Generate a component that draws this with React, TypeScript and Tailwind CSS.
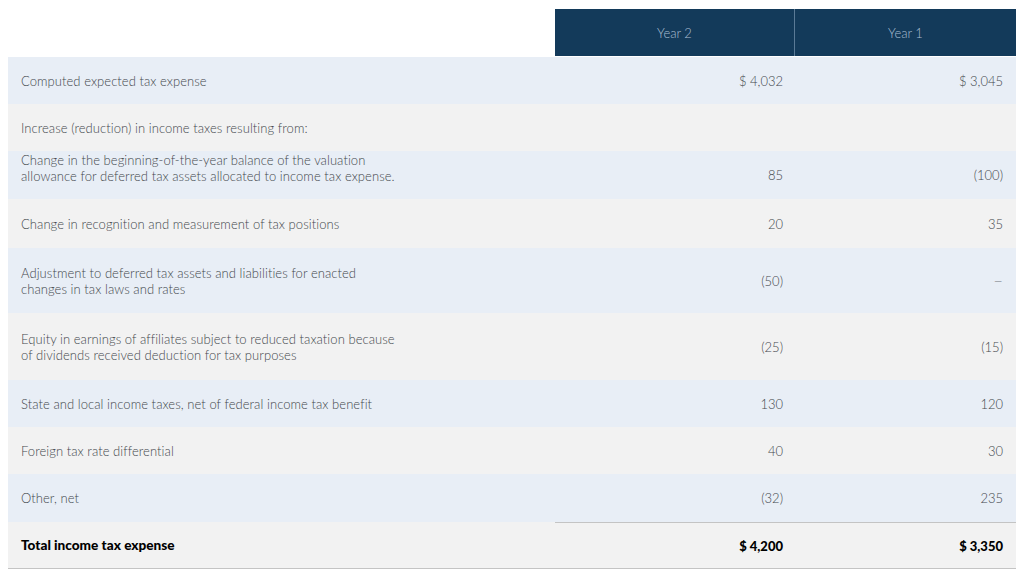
import React from 'react';

type Row = {
  label: string[];
  y2: string;
  y1: string;
  tone: 'blue' | 'gray';
  h: string;
  top?: boolean;
};

const rows: Row[] = [
  { label: ['Computed expected tax expense'], y2: '$ 4,032', y1: '$ 3,045', tone: 'blue', h: 'h-[47px]' },
  { label: ['Increase (reduction) in income taxes resulting from:'], y2: '', y1: '', tone: 'gray', h: 'h-[47px]' },
  {
    label: [
      'Change in the beginning-of-the-year balance of the valuation',
      'allowance for deferred tax assets allocated to income tax expense.',
    ],
    y2: '85',
    y1: '(100)',
    tone: 'blue',
    h: 'h-[48px]',
    top: true,
  },
  { label: ['Change in recognition and measurement of tax positions'], y2: '20', y1: '35', tone: 'gray', h: 'h-[49px]' },
  {
    label: ['Adjustment to deferred tax assets and liabilities for enacted', 'changes in tax laws and rates'],
    y2: '(50)',
    y1: '–',
    tone: 'blue',
    h: 'h-[65px]',
  },
  {
    label: ['Equity in earnings of affiliates subject to reduced taxation because', 'of dividends received deduction for tax purposes'],
    y2: '(25)',
    y1: '(15)',
    tone: 'gray',
    h: 'h-[67px]',
  },
  { label: ['State and local income taxes, net of federal income tax benefit'], y2: '130', y1: '120', tone: 'blue', h: 'h-[47px]' },
  { label: ['Foreign tax rate differential'], y2: '40', y1: '30', tone: 'gray', h: 'h-[47px]' },
  { label: ['Other, net'], y2: '(32)', y1: '235', tone: 'blue', h: 'h-[48px]' },
];

export default function App() {
  return (
    <div className="w-[1024px] h-[576px] bg-white pt-[9px] px-2 font-['Lato',sans-serif] text-[13px] leading-4 font-light text-[#44484d]">
      {/* Column headers */}
      <div className="grid grid-cols-[547px_240px_221px] h-[47px]">
        <div />
        <div className="bg-[#133a5a] flex items-center justify-center text-[#a9bdd2] border-r border-[#5a7a96]">
          Year 2
        </div>
        <div className="bg-[#133a5a] flex items-center justify-center text-[#a9bdd2]">Year 1</div>
      </div>

      <div className="mt-px">
        {rows.map((r, i) => (
          <div
            key={i}
            className={`grid grid-cols-[547px_240px_221px] ${r.h} ${r.tone === 'blue' ? 'bg-[#e8eef6]' : 'bg-[#f2f2f2]'}`}
          >
            <div className={`flex flex-col pl-[13px] ${r.top ? 'justify-start pt-[1px]' : 'justify-center'}`}>
              {r.label.map((l, j) => (
                <span key={j} className="tracking-[0.06px]">{l}</span>
              ))}
            </div>
            <div className="flex items-center justify-end pr-3">{r.y2}</div>
            <div className="flex items-center justify-end pr-[13px]">
              {r.y1 === '–' ? <span className="text-[17px] text-[#8a8f95]">{r.y1}</span> : r.y1}
            </div>
          </div>
        ))}

        {/* Total row */}
        <div className="grid grid-cols-[547px_240px_221px] h-[47px] bg-[#f2f2f2] border-b border-[#c4c4c4] font-black text-black">
          <div className="flex items-center pl-[13px] text-[13.6px]">Total income tax expense</div>
          <div className="flex items-center justify-end pr-3 border-t border-[#c4c4c4]">$ 4,200</div>
          <div className="flex items-center justify-end pr-[13px] border-t border-[#c4c4c4]">$ 3,350</div>
        </div>
      </div>
    </div>
  );
}
